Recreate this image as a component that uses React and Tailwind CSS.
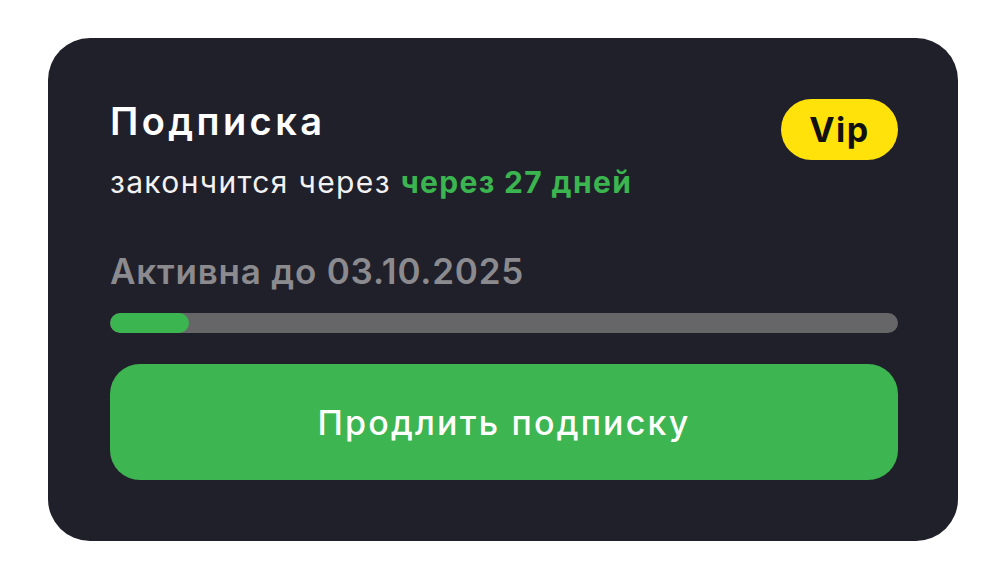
import React from "react";

const daysLeft = 27;
const progress = 10;

export default function App() {
  return (
    <div className="w-[1000px] h-[570px] bg-white pl-[48px] pt-[38px] font-['Inter',sans-serif]">
      <div className="w-[910px] h-[503px] rounded-[42px] bg-[#20202a] px-[60px] pt-[61px]">
        {/* Header */}
        <div className="flex items-start justify-between">
          <div className="pl-[2px]">
            <h2 className="text-[38px] leading-[44px] font-semibold text-white tracking-[3.4px]">
              Подписка
            </h2>
            <p className="mt-[21px] text-[30px] leading-[36px] text-[#f2f2f2] tracking-[1.35px]">
              закончится через{" "}
              <span className="font-bold text-[#3bb54f]">через {daysLeft} дней</span>
            </p>
          </div>
          <span className="h-[61px] w-[117px] rounded-full bg-[#ffe20a] flex items-center justify-center text-[34px] font-bold text-[#111] tracking-[1.5px]">
            Vip
          </span>
        </div>

        {/* Expiry */}
        <p className="mt-[51px] pl-[2px] text-[35px] leading-[40px] font-semibold text-[#8b8b8f] tracking-[0.8px]">
          Активна до 03.10.2025
        </p>
        <div className="mt-[22px] ml-[2px] h-[20px] rounded-full bg-[#666668] overflow-hidden">
          <div className="h-full rounded-full bg-[#3bb54f]" style={{ width: `${progress}%` }} />
        </div>

        <button className="mt-[31px] ml-[2px] w-[788px] h-[116px] rounded-[30px] bg-[#3db551] text-white text-[34px] font-medium tracking-[2.2px]">
          Продлить подписку
        </button>
      </div>
    </div>
  );
}
